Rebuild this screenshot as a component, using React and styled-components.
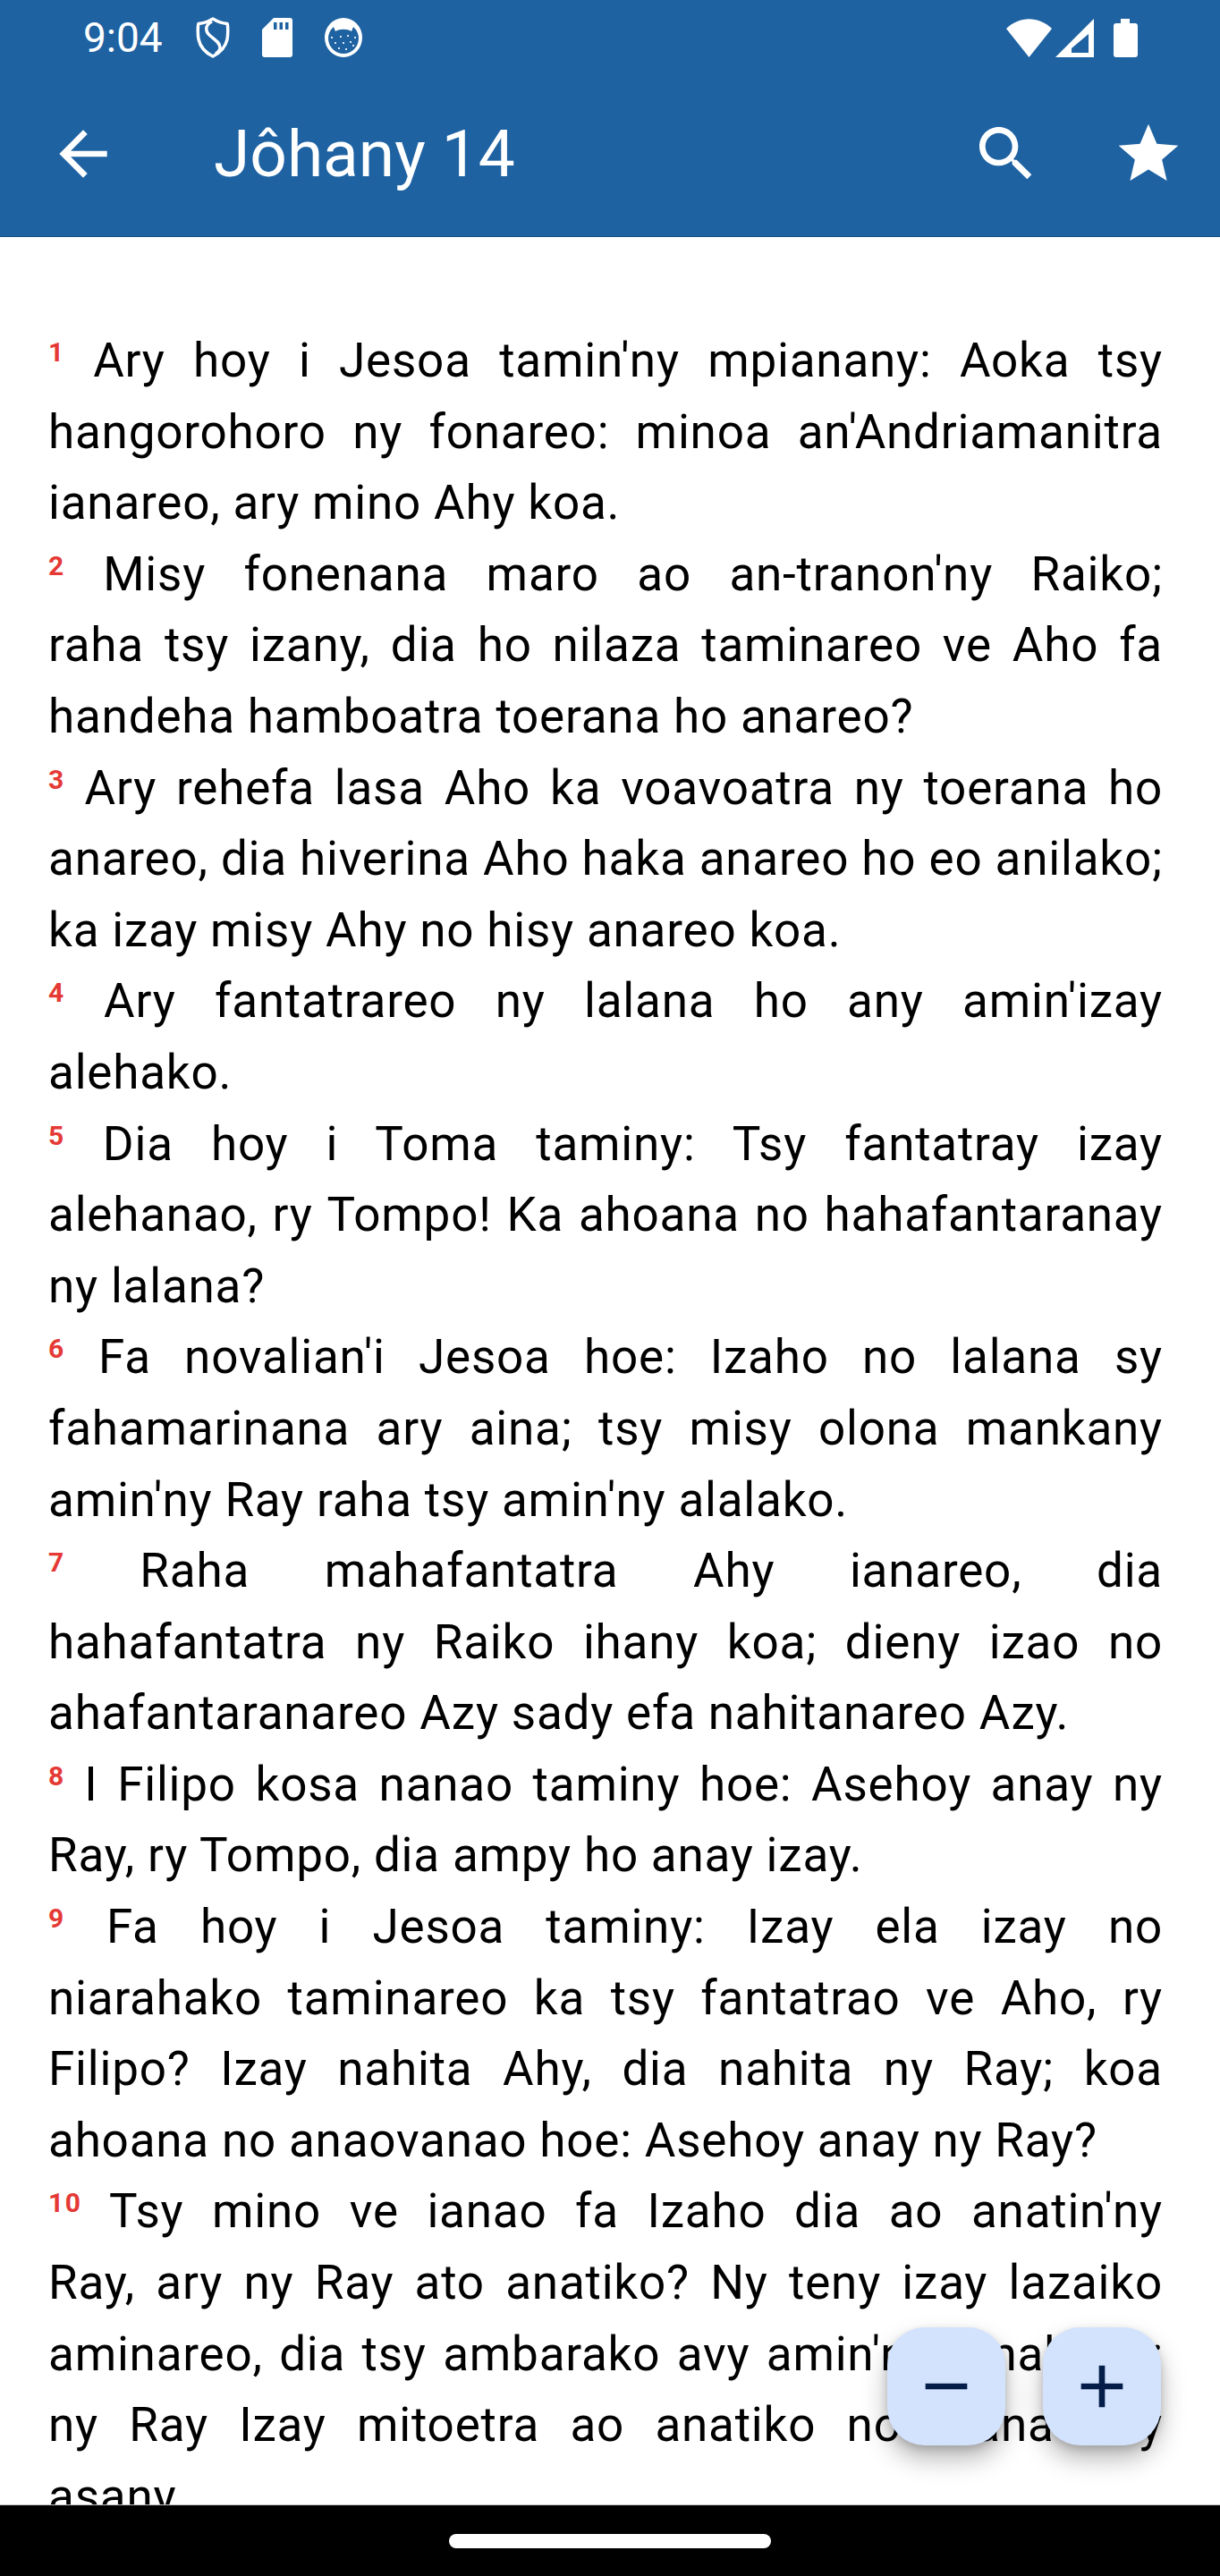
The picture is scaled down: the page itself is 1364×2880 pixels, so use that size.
import React from "react";
import styled, { createGlobalStyle } from "styled-components";

const verses = [
  [
    "Ary hoy i Jesoa tamin'ny mpianany: Aoka tsy",
    "hangorohoro ny fonareo: minoa an'Andriamanitra",
    "ianareo, ary mino Ahy koa.",
  ],
  [
    "Misy fonenana maro ao an-tranon'ny Raiko;",
    "raha tsy izany, dia ho nilaza taminareo ve Aho fa",
    "handeha hamboatra toerana ho anareo?",
  ],
  [
    "Ary rehefa lasa Aho ka voavoatra ny toerana ho",
    "anareo, dia hiverina Aho haka anareo ho eo anilako;",
    "ka izay misy Ahy no hisy anareo koa.",
  ],
  ["Ary fantatrareo ny lalana ho any amin'izay", "alehako."],
  [
    "Dia hoy i Toma taminy: Tsy fantatray izay",
    "alehanao, ry Tompo! Ka ahoana no hahafantaranay",
    "ny lalana?",
  ],
  [
    "Fa novalian'i Jesoa hoe: Izaho no lalana sy",
    "fahamarinana ary aina; tsy misy olona mankany",
    "amin'ny Ray raha tsy amin'ny alalako.",
  ],
  [
    "Raha mahafantatra Ahy ianareo, dia",
    "hahafantatra ny Raiko ihany koa; dieny izao no",
    "ahafantaranareo Azy sady efa nahitanareo Azy.",
  ],
  [
    "I Filipo kosa nanao taminy hoe: Asehoy anay ny",
    "Ray, ry Tompo, dia ampy ho anay izay.",
  ],
  [
    "Fa hoy i Jesoa taminy: Izay ela izay no",
    "niarahako taminareo ka tsy fantatrao ve Aho, ry",
    "Filipo? Izay nahita Ahy, dia nahita ny Ray; koa",
    "ahoana no anaovanao hoe: Asehoy anay ny Ray?",
  ],
  [
    "Tsy mino ve ianao fa Izaho dia ao anatin'ny",
    "Ray, ary ny Ray ato anatiko? Ny teny izay lazaiko",
    "aminareo, dia tsy ambarako avy amin'ny fanahiko ;",
    "ny Ray Izay mitoetra ao anatiko no manao ny",
    "asany.",
  ],
];

const GlobalStyle = createGlobalStyle`
  html, body {
    margin: 0;
    padding: 0;
    background: #fff;
  }
  body {
    font-family: Roboto, "Noto Sans", sans-serif;
  }
`;

const Screen = styled.div`
  position: relative;
  width: 1364px;
  height: 2880px;
  display: flex;
  flex-direction: column;
  overflow: hidden;
  background: #fff;
`;

const Header = styled.header`
  flex: none;
  height: 265px;
  box-sizing: border-box;
  background: #1e62a2;
  border-bottom: 1px solid #0f4a80;
  color: #fff;
  display: flex;
  flex-direction: column;
`;

const StatusBar = styled.div`
  height: 84px;
  box-sizing: border-box;
  padding: 0 92px 0 93px;
  display: flex;
  align-items: center;
`;

const Time = styled.span`
  font-size: 46px;
  width: 126px;
  line-height: 84px;
`;

const StatusLeft = styled.div`
  display: flex;
  align-items: center;
  gap: 36px;
`;

const StatusRight = styled.div`
  margin-left: auto;
  display: flex;
  align-items: center;
  gap: 4px;
`;

const BatterySlot = styled.span`
  margin-left: 18px;
  display: flex;
`;

const Toolbar = styled.div`
  flex: 1;
  display: flex;
  align-items: center;
  padding: 0 40px 4px 53px;
`;

const IconButton = styled.button`
  flex: none;
  width: 80px;
  height: 80px;
  padding: 0;
  border: 0;
  background: none;
  color: #fff;
  display: flex;
  align-items: center;
  justify-content: center;
  margin-left: ${(p) => p.$gap || 0}px;
`;

const Title = styled.h1`
  margin: 0 0 0 106px;
  font-size: 73px;
  font-weight: 400;
  line-height: 1;
  flex: 1;
`;

const Content = styled.main`
  flex: 1;
  min-height: 0;
  overflow: hidden;
  box-sizing: border-box;
  padding: 99px 64px 0 54px;
`;

const Verse = styled.p`
  margin: 0;
  font-size: 53px;
  line-height: 79.6px;
  letter-spacing: 0.8px;
  color: #000;
`;

const VerseLine = styled.span`
  display: block;
  text-align: left;
  text-align-last: ${(p) => (p.$last ? "left" : "justify")};
`;

const VerseNumber = styled.sup`
  font-size: 30px;
  font-weight: 700;
  letter-spacing: 1.5px;
  line-height: 0;
  color: #e53935;
  vertical-align: 17px;
`;

const NavBar = styled.div`
  flex: none;
  height: 80px;
  background: #000;
  border-top: 1px solid #bdbdbd;
  box-sizing: border-box;
  display: flex;
  align-items: center;
  justify-content: center;
`;

const NavPill = styled.div`
  width: 360px;
  height: 16px;
  border-radius: 8px;
  background: #fff;
`;

const Fabs = styled.div`
  position: absolute;
  right: 66px;
  top: 2602px;
  display: flex;
  gap: 42px;
`;

const Fab = styled.button`
  width: 132px;
  height: 132px;
  padding: 0;
  border: 0;
  border-radius: 42px;
  background: #d3e3fd;
  color: #041e49;
  display: flex;
  align-items: center;
  justify-content: center;
  box-shadow: 0 15px 28px rgba(0, 0, 0, 0.28), 0 4px 10px rgba(0, 0, 0, 0.16);
`;

const ShieldIcon = () => (
  <svg width="38" height="46" viewBox="0 0 38 46">
    <path d="M19 2 C24 5 29 7 35 7.5 C36 10 36 20 35 25 C33 34 27 40 19 44 C11 40 5 34 3 25 C2 20 2 10 3 7.5 C9 7 14 5 19 2 Z" fill="none" stroke="#fff" strokeWidth="3.5" strokeLinejoin="round" />
    <path d="M18 5 C10 9 10 16 16 21 C22 26 27 29 27 34 C27 37 24 40 22 41" fill="none" stroke="#fff" strokeWidth="3.5" />
  </svg>
);

const SdIcon = () => (
  <svg width="34" height="44" viewBox="0 0 34 44">
    <path d="M13 0 H31 A3 3 0 0 1 34 3 V41 A3 3 0 0 1 31 44 H3 A3 3 0 0 1 0 41 V13 Z" fill="#fff" />
    <path d="M13 5h3.5v8H13zM19.5 5H23v8h-3.5zM26 5h3.5v8H26z" fill="#1e62a2" />
  </svg>
);

const BearIcon = () => (
  <svg width="42" height="44" viewBox="0 0 42 44">
    <ellipse cx="21" cy="22" rx="21" ry="22" fill="#fff" />
    <circle cx="21" cy="23" r="17" fill="#1e62a2" />
    <path d="M8 5 L12 15 C17 12 25 12 30 15 L34 5 Z" fill="#fff" />
    <path d="M7 21h2v2H7zM11 27h2v2h-2zM17 20h2v2h-2zM25 19h2v2h-2zM33 21h2v2h-2zM20 27h2v2h-2zM28 26h2v2h-2zM15 33h2v2h-2zM23 34h2v2h-2zM31 30h2v2h-2z" fill="#d9e6f5" />
  </svg>
);

const WifiIcon = () => (
  <svg width="51" height="43" viewBox="0 0 51 43">
    <path d="M25.5 43 L0 11 C15 -3.5 36 -3.5 51 11 Z" fill="#fff" />
  </svg>
);

const SignalIcon = () => (
  <svg width="43" height="43" viewBox="0 0 43 43">
    <path fillRule="evenodd" d="M43 0 V43 H0 Z M37 17 L18 33 V38 H37 Z" fill="#fff" />
  </svg>
);

const BatteryIcon = () => (
  <svg width="27" height="43" viewBox="0 0 27 43">
    <path d="M8 0 H18 V5 H24 A3 3 0 0 1 27 8 V40 A3 3 0 0 1 24 43 H3 A3 3 0 0 1 0 40 V8 A3 3 0 0 1 3 5 H8 Z" fill="#fff" />
  </svg>
);

const MaterialIcon = ({ d }) => (
  <svg width="80" height="80" viewBox="0 0 24 24" fill="currentColor">
    <path d={d} />
  </svg>
);

const ICON_BACK = "M20 11H7.83l5.59-5.59L12 4l-8 8 8 8 1.41-1.41L7.83 13H20v-2z";
const ICON_SEARCH = "M15.5 14h-.79l-.28-.27C15.41 12.59 16 11.11 16 9.5 16 5.91 13.09 3 9.5 3S3 5.91 3 9.5 5.91 16 9.5 16c1.61 0 3.09-.59 4.23-1.57l.27.28v.79l5 4.99L20.49 19l-4.99-5zm-6 0C7.01 14 5 11.99 5 9.5S7.01 5 9.5 5 14 7.01 14 9.5 11.99 14 9.5 14z";
const ICON_STAR = "M12 17.27L18.18 21l-1.64-7.03L22 9.24l-7.19-.61L12 2 9.19 8.63 2 9.24l5.46 4.73L5.82 21z";

export default function App() {
  return (
    <>
      <GlobalStyle />
      <Screen>
        <Header>
          <StatusBar>
            <Time>9:04</Time>
            <StatusLeft>
              <ShieldIcon />
              <SdIcon />
              <BearIcon />
            </StatusLeft>
            <StatusRight>
              <WifiIcon />
              <SignalIcon />
              <BatterySlot>
                <BatteryIcon />
              </BatterySlot>
            </StatusRight>
          </StatusBar>
          <Toolbar>
            <IconButton aria-label="back">
              <MaterialIcon d={ICON_BACK} />
            </IconButton>
            <Title>Jôhany 14</Title>
            <IconButton aria-label="search">
              <MaterialIcon d={ICON_SEARCH} />
            </IconButton>
            <IconButton aria-label="favourite" $gap={79}>
              <MaterialIcon d={ICON_STAR} />
            </IconButton>
          </Toolbar>
        </Header>
        <Content>
          {verses.map((lines, i) => (
            <Verse key={i}>
              {lines.map((line, j) => (
                <VerseLine key={j} $last={j === lines.length - 1}>
                  {j === 0 && <VerseNumber>{i + 1}</VerseNumber>}
                  {j === 0 && " "}
                  {line}
                </VerseLine>
              ))}
            </Verse>
          ))}
        </Content>
        <NavBar>
          <NavPill />
        </NavBar>
        <Fabs>
          <Fab aria-label="smaller">
            <svg width="80" height="80" viewBox="0 0 24 24" fill="currentColor">
              <path d="M5 11h14v2H5z" />
            </svg>
          </Fab>
          <Fab aria-label="larger">
            <svg width="80" height="80" viewBox="0 0 24 24" fill="currentColor">
              <path d="M19 13h-6v6h-2v-6H5v-2h6V5h2v6h6v2z" />
            </svg>
          </Fab>
        </Fabs>
      </Screen>
    </>
  );
}
